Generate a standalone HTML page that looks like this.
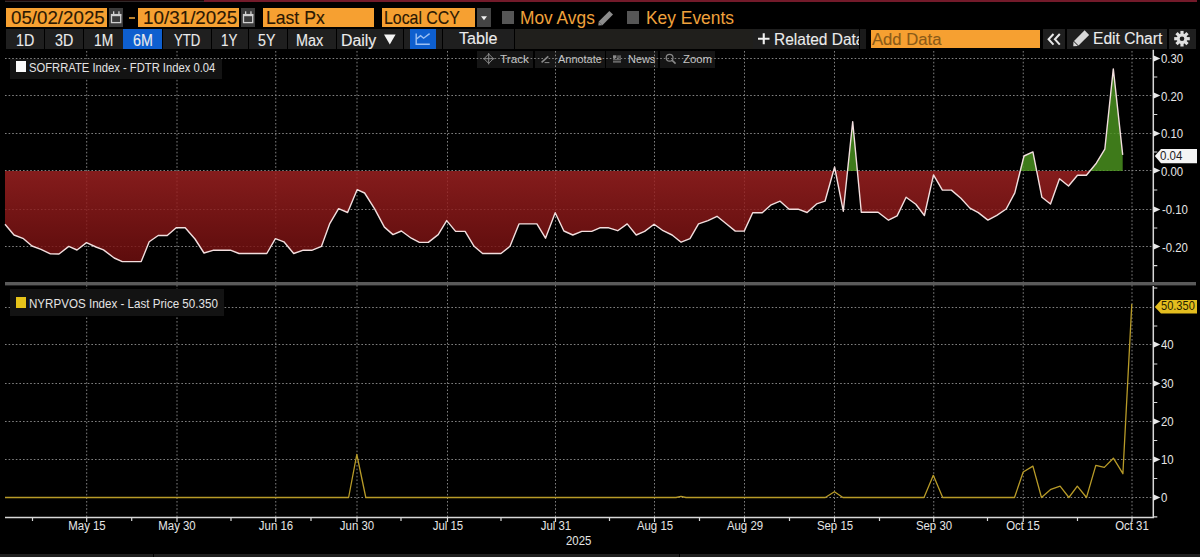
<!DOCTYPE html>
<html><head><meta charset="utf-8"><title>Chart</title>
<style>
html,body{margin:0;padding:0;background:#000;}
body{width:1200px;height:557px;overflow:hidden;position:relative;font-family:"Liberation Sans",sans-serif;}
.a{position:absolute;}
.t{position:absolute;white-space:nowrap;transform-origin:0 0;}
.bold{-webkit-text-stroke:0.12px currentColor;}
.box{position:absolute;background:#f6a031;}
.cal{position:absolute;background:#3b3b3b;}
.btn{position:absolute;top:28.8px;height:20.7px;background:#1f1f1f;}
.tb{position:absolute;top:51.2px;height:16.5px;background:#151515;}
.xl{position:absolute;top:519.95px;width:120px;text-align:center;color:#e6e6e6;font-size:12.82px;line-height:12.82px;white-space:nowrap;transform:scaleX(0.891);transform-origin:60px 0;}
</style></head><body>
<div class="a" style="left:5px;top:0;width:199px;height:1px;background:#1e0808"></div><div class="a" style="left:5px;top:1px;width:199px;height:1px;background:#302828"></div>
<div class="a" style="left:204px;top:0;width:993px;height:1.6px;background:#731a2a"></div>
<!-- track bar -->
<div class="tb" style="left:477px;width:56px"></div>
<div class="tb" style="left:535px;width:70px"></div>
<div class="tb" style="left:606px;width:52px"></div>
<div class="tb" style="left:660px;width:54.5px"></div>
<svg class="a" style="left:0;top:0" width="1200" height="557" viewBox="0 0 1200 557">
<defs><linearGradient id="rg" x1="0" y1="171" x2="0" y2="262" gradientUnits="userSpaceOnUse"><stop offset="0" stop-color="#a22222"/><stop offset="1" stop-color="#720f0f"/></linearGradient><clipPath id="cb"><rect x="0" y="171" width="1200" height="120"/></clipPath><clipPath id="ca"><rect x="0" y="40" width="1200" height="131"/></clipPath></defs>
<path d="M86.7,51 V517 M177,51 V517 M275.75,51 V517 M357,51 V517 M447.5,51 V517 M555.5,51 V517 M654.5,51 V517 M744.5,51 V517 M834.5,51 V517 M933.75,51 V517 M1023.25,51 V517 M1132,51 V517 M5,58.5 H1153.3 M5,95.5 H1153.3 M5,133.5 H1153.3 M5,170.5 H1153.3 M5,209.5 H1153.3 M5,246.5 H1153.3 M5,307.5 H1153.3 M5,344.5 H1153.3 M5,383.5 H1153.3 M5,421.5 H1153.3 M5,459.5 H1153.3 M5,497.5 H1153.3" stroke="#808080" stroke-width="1" stroke-dasharray="1.6 2.0" fill="none"/>
<path d="M5.0,224.2 L14.0,235.0 L23.5,238.7 L32.0,246.0 L41.0,249.3 L50.4,253.9 L59.0,254.0 L68.8,246.4 L77.0,250.0 L86.5,242.6 L96.0,247.0 L103.5,249.9 L114.2,258.0 L122.3,261.6 L141.2,261.6 L149.2,241.8 L158.2,235.5 L167.2,235.5 L176.2,227.8 L185.2,227.8 L195.0,239.0 L204.0,253.0 L213.0,250.3 L231.0,250.3 L239.0,253.5 L266.8,253.5 L275.4,238.6 L283.9,241.8 L293.7,253.5 L302.7,250.3 L311.7,250.3 L321.5,246.3 L329.6,223.9 L338.6,208.6 L347.6,212.5 L357.1,189.7 L364.6,193.0 L374.5,208.6 L384.4,227.1 L393.0,234.6 L401.4,231.0 L411.3,238.2 L419.4,242.4 L428.3,242.4 L438.2,234.6 L446.7,220.6 L455.6,231.4 L465.1,231.4 L474.1,246.3 L482.6,253.5 L501.0,253.5 L510.0,246.3 L519.0,223.9 L536.9,223.9 L545.5,238.2 L555.2,212.7 L563.9,231.0 L572.8,235.0 L581.8,231.4 L591.7,231.4 L599.8,227.8 L608.7,227.8 L617.7,230.7 L627.2,223.9 L636.2,235.0 L644.6,231.4 L654.1,224.2 L663.1,230.7 L672.1,235.0 L681.1,242.2 L690.0,238.6 L698.5,223.9 L708.0,220.6 L717.0,216.3 L727.2,224.5 L735.3,231.1 L744.2,231.1 L752.7,212.8 L762.2,212.8 L771.2,204.8 L780.1,201.2 L789.1,209.2 L798.1,209.2 L807.1,212.5 L816.6,203.9 L825.0,201.2 L834.6,167.0 L843.3,211.2 L852.7,121.8 L861.3,212.3 L878.1,212.3 L888.5,220.2 L897.1,215.9 L906.1,197.2 L915.8,204.3 L924.4,215.5 L933.5,174.9 L942.4,190.1 L951.4,190.1 L960.9,198.2 L969.9,208.1 L978.3,212.6 L987.9,220.1 L996.8,215.3 L1006.2,209.0 L1014.8,192.8 L1024.0,156.0 L1032.9,151.9 L1041.9,197.3 L1050.5,204.0 L1059.5,178.8 L1068.5,186.0 L1077.5,175.2 L1086.4,175.2 L1096.3,163.2 L1104.8,149.2 L1113.3,68.9 L1122.7,154.8 L1122.7,171.0 L5.0,171.0 Z" fill="url(#rg)" fill-opacity="0.82" clip-path="url(#cb)"/>
<path d="M5.0,224.2 L14.0,235.0 L23.5,238.7 L32.0,246.0 L41.0,249.3 L50.4,253.9 L59.0,254.0 L68.8,246.4 L77.0,250.0 L86.5,242.6 L96.0,247.0 L103.5,249.9 L114.2,258.0 L122.3,261.6 L141.2,261.6 L149.2,241.8 L158.2,235.5 L167.2,235.5 L176.2,227.8 L185.2,227.8 L195.0,239.0 L204.0,253.0 L213.0,250.3 L231.0,250.3 L239.0,253.5 L266.8,253.5 L275.4,238.6 L283.9,241.8 L293.7,253.5 L302.7,250.3 L311.7,250.3 L321.5,246.3 L329.6,223.9 L338.6,208.6 L347.6,212.5 L357.1,189.7 L364.6,193.0 L374.5,208.6 L384.4,227.1 L393.0,234.6 L401.4,231.0 L411.3,238.2 L419.4,242.4 L428.3,242.4 L438.2,234.6 L446.7,220.6 L455.6,231.4 L465.1,231.4 L474.1,246.3 L482.6,253.5 L501.0,253.5 L510.0,246.3 L519.0,223.9 L536.9,223.9 L545.5,238.2 L555.2,212.7 L563.9,231.0 L572.8,235.0 L581.8,231.4 L591.7,231.4 L599.8,227.8 L608.7,227.8 L617.7,230.7 L627.2,223.9 L636.2,235.0 L644.6,231.4 L654.1,224.2 L663.1,230.7 L672.1,235.0 L681.1,242.2 L690.0,238.6 L698.5,223.9 L708.0,220.6 L717.0,216.3 L727.2,224.5 L735.3,231.1 L744.2,231.1 L752.7,212.8 L762.2,212.8 L771.2,204.8 L780.1,201.2 L789.1,209.2 L798.1,209.2 L807.1,212.5 L816.6,203.9 L825.0,201.2 L834.6,167.0 L843.3,211.2 L852.7,121.8 L861.3,212.3 L878.1,212.3 L888.5,220.2 L897.1,215.9 L906.1,197.2 L915.8,204.3 L924.4,215.5 L933.5,174.9 L942.4,190.1 L951.4,190.1 L960.9,198.2 L969.9,208.1 L978.3,212.6 L987.9,220.1 L996.8,215.3 L1006.2,209.0 L1014.8,192.8 L1024.0,156.0 L1032.9,151.9 L1041.9,197.3 L1050.5,204.0 L1059.5,178.8 L1068.5,186.0 L1077.5,175.2 L1086.4,175.2 L1096.3,163.2 L1104.8,149.2 L1113.3,68.9 L1122.7,154.8 L1122.7,171.0 L5.0,171.0 Z" fill="#4c9520" fill-opacity="0.82" clip-path="url(#ca)"/>
<path d="M5.0,224.2 L14.0,235.0 L23.5,238.7 L32.0,246.0 L41.0,249.3 L50.4,253.9 L59.0,254.0 L68.8,246.4 L77.0,250.0 L86.5,242.6 L96.0,247.0 L103.5,249.9 L114.2,258.0 L122.3,261.6 L141.2,261.6 L149.2,241.8 L158.2,235.5 L167.2,235.5 L176.2,227.8 L185.2,227.8 L195.0,239.0 L204.0,253.0 L213.0,250.3 L231.0,250.3 L239.0,253.5 L266.8,253.5 L275.4,238.6 L283.9,241.8 L293.7,253.5 L302.7,250.3 L311.7,250.3 L321.5,246.3 L329.6,223.9 L338.6,208.6 L347.6,212.5 L357.1,189.7 L364.6,193.0 L374.5,208.6 L384.4,227.1 L393.0,234.6 L401.4,231.0 L411.3,238.2 L419.4,242.4 L428.3,242.4 L438.2,234.6 L446.7,220.6 L455.6,231.4 L465.1,231.4 L474.1,246.3 L482.6,253.5 L501.0,253.5 L510.0,246.3 L519.0,223.9 L536.9,223.9 L545.5,238.2 L555.2,212.7 L563.9,231.0 L572.8,235.0 L581.8,231.4 L591.7,231.4 L599.8,227.8 L608.7,227.8 L617.7,230.7 L627.2,223.9 L636.2,235.0 L644.6,231.4 L654.1,224.2 L663.1,230.7 L672.1,235.0 L681.1,242.2 L690.0,238.6 L698.5,223.9 L708.0,220.6 L717.0,216.3 L727.2,224.5 L735.3,231.1 L744.2,231.1 L752.7,212.8 L762.2,212.8 L771.2,204.8 L780.1,201.2 L789.1,209.2 L798.1,209.2 L807.1,212.5 L816.6,203.9 L825.0,201.2 L834.6,167.0 L843.3,211.2 L852.7,121.8 L861.3,212.3 L878.1,212.3 L888.5,220.2 L897.1,215.9 L906.1,197.2 L915.8,204.3 L924.4,215.5 L933.5,174.9 L942.4,190.1 L951.4,190.1 L960.9,198.2 L969.9,208.1 L978.3,212.6 L987.9,220.1 L996.8,215.3 L1006.2,209.0 L1014.8,192.8 L1024.0,156.0 L1032.9,151.9 L1041.9,197.3 L1050.5,204.0 L1059.5,178.8 L1068.5,186.0 L1077.5,175.2 L1086.4,175.2 L1096.3,163.2 L1104.8,149.2 L1113.3,68.9 L1122.7,154.8" stroke="#f2dede" stroke-width="1.4" fill="none" stroke-linejoin="round"/>
<path d="M5.0,497.5 L348.6,497.5 L356.8,454.5 L365.8,497.5 L676.0,497.5 L681.0,496.3 L686.0,497.5 L825.3,497.5 L834.4,491.7 L842.9,497.5 L924.0,497.5 L933.3,475.3 L942.7,497.5 L1014.5,497.5 L1023.2,472.0 L1032.9,466.1 L1041.5,497.5 L1050.9,489.3 L1060.1,486.2 L1068.9,497.5 L1077.3,486.2 L1086.5,497.5 L1095.8,465.4 L1104.3,467.4 L1113.4,458.2 L1122.9,473.7 L1131.8,304.0" stroke="#b89b28" stroke-width="1.3" fill="none" stroke-linejoin="round"/>
<rect x="5" y="282" width="1191" height="3.4" fill="#5a5a5a"/>
<path d="M1153.3,49.7 V282 M1153.3,286 V518 M5,517.6 H1154.0" stroke="#d8d8d8" stroke-width="1.5" fill="none"/>
<path d="M1153.3,55.2 L1160.3,58.5 L1153.3,61.8 Z M1153.3,92.2 L1160.3,95.5 L1153.3,98.8 Z M1153.3,130.2 L1160.3,133.5 L1153.3,136.8 Z M1153.3,167.2 L1160.3,170.5 L1153.3,173.8 Z M1153.3,206.2 L1160.3,209.5 L1153.3,212.8 Z M1153.3,243.2 L1160.3,246.5 L1153.3,249.8 Z M1153.3,341.2 L1160.3,344.5 L1153.3,347.8 Z M1153.3,380.2 L1160.3,383.5 L1153.3,386.8 Z M1153.3,418.2 L1160.3,421.5 L1153.3,424.8 Z M1153.3,456.2 L1160.3,459.5 L1153.3,462.8 Z M1153.3,494.2 L1160.3,497.5 L1153.3,500.8 Z" fill="#e8e8e8"/>
<path d="M1153.3,77.0 H1157.3 M1153.3,114.5 H1157.3 M1153.3,152.0 H1157.3 M1153.3,190.0 H1157.3 M1153.3,228.0 H1157.3 M1153.3,265.7 H1157.3 M1153.3,288 H1157.3 M1153.3,326.0 H1157.3 M1153.3,364.0 H1157.3 M1153.3,402.5 H1157.3 M1153.3,440.5 H1157.3 M1153.3,478.5 H1157.3 M1153.3,516.9 H1157.3 M86.7,517.6 V522 M177,517.6 V522 M275.75,517.6 V522 M357,517.6 V522 M447.5,517.6 V522 M555.5,517.6 V522 M654.5,517.6 V522 M744.5,517.6 V522 M834.5,517.6 V522 M933.75,517.6 V522 M1023.25,517.6 V522 M1132,517.6 V522 M32.5,517.6 V521 M131.7,517.6 V521 M231,517.6 V521 M311,517.6 V521 M401,517.6 V521 M501,517.6 V521 M609.5,517.6 V521 M699.5,517.6 V521 M789.5,517.6 V521 M879.5,517.6 V521 M987.5,517.6 V521 M1077.5,517.6 V521" stroke="#d8d8d8" stroke-width="1.2" fill="none"/>
<path d="M1154.8,156 L1161,149 H1197 V163.3 H1161 Z" fill="#f4f4f4"/>
<path d="M1154.8,307 L1161,300 H1197 V313.6 H1161 Z" fill="#e3bd1f"/>
</svg>
<!-- toolbar row 1 -->
<div class="box" style="left:6.2px;top:8px;width:101.3px;height:19px;"></div>
<div class="cal" style="left:108.8px;top:8px;width:14.2px;height:19px;"></div>
<div class="a" style="left:129.3px;top:17px;width:5.7px;height:1.5px;background:#b8802e"></div>
<div class="box" style="left:138.3px;top:8px;width:100.7px;height:19px;"></div>
<div class="cal" style="left:240.5px;top:8px;width:14.5px;height:19px;"></div>
<div class="box" style="left:262.8px;top:8px;width:111.7px;height:19px;"></div>
<div class="box" style="left:382.2px;top:8px;width:93.3px;height:19px;"></div>
<div class="cal" style="left:477px;top:8px;width:14.2px;height:19px;background:#444"></div>
<div class="a" style="left:501.9px;top:11.2px;width:12px;height:12.6px;background:#565656"></div>
<div class="a" style="left:626.5px;top:11.2px;width:12.7px;height:12.6px;background:#565656"></div>
<!-- toolbar row 2 -->
<div class="btn" style="left:6px;width:38px"></div>
<div class="btn" style="left:45px;width:37.5px"></div>
<div class="btn" style="left:83.5px;width:39px"></div>
<div class="btn" style="left:122.5px;width:39.5px;background:#0e5fcf"></div>
<div class="btn" style="left:163px;width:47.5px"></div>
<div class="btn" style="left:211.5px;width:36px"></div>
<div class="btn" style="left:248.5px;width:38px"></div>
<div class="btn" style="left:287.5px;width:48px"></div>
<div class="btn" style="left:336.5px;width:66.5px"></div>
<div class="btn" style="left:404px;width:38px"></div>
<div class="btn" style="left:409.5px;width:26px;background:#0e5fcf"></div>
<div class="btn" style="left:443px;width:71px"></div>
<div class="btn" style="left:515px;width:237.5px;background:#201f1c"></div>
<div class="btn" style="left:752.5px;width:106.5px;overflow:hidden"></div>
<div class="btn" style="left:860px;width:6px;background:#1a1a1a"></div>
<div class="box" style="left:870.5px;top:29.8px;width:169.5px;height:18px;"></div>
<div class="btn" style="left:1043.3px;width:22px"></div>
<div class="btn" style="left:1067.3px;width:100px"></div>
<div class="btn" style="left:1169.3px;width:26.7px"></div>
<!-- legends -->
<div class="a" style="left:9.5px;top:59px;width:212.5px;height:20px;background:#131313"></div>
<div class="a" style="left:15.5px;top:61.2px;width:10.7px;height:10.6px;background:#fafafa"></div>
<div class="a" style="left:9.5px;top:289px;width:214.5px;height:27px;background:#131313"></div>
<div class="a" style="left:15.8px;top:297.2px;width:10.4px;height:10.6px;background:#e6c31a"></div>
<svg class="a" style="left:0;top:0" width="1200" height="80" viewBox="0 0 1200 80">
<g fill="none" stroke="#d0d0d0" stroke-width="1.3">
<rect x="111.5" y="14.6" width="9.2" height="8" />
<rect x="243.5" y="14.6" width="9.2" height="8" />
</g>
<g fill="#d0d0d0">
<rect x="111" y="14" width="10.2" height="2.2"/>
<rect x="113" y="11.3" width="1.3" height="3"/><rect x="118.3" y="11.3" width="1.3" height="3"/>
<rect x="243" y="14" width="10.2" height="2.2"/>
<rect x="245" y="11.3" width="1.3" height="3"/><rect x="250.3" y="11.3" width="1.3" height="3"/>
</g>
<path d="M481,16.2 L487,16.2 L484,20.2 Z" fill="#f0f0f0"/>
<!-- Mov Avgs pencil -->
<g transform="translate(598.3,25.6) rotate(-45)">
<rect x="3.2" y="-2.6" width="15" height="5.2" fill="#8c8c8c"/>
<path d="M0,0 L3.2,-2.6 L3.2,2.6 Z" fill="#8c8c8c"/>
</g>
<!-- Daily triangle -->
<path d="M384,34.4 L395.6,34.4 L389.8,44.5 Z" fill="#f4f4f4"/>
<!-- chart icon -->
<path d="M416.2,33.5 V44.3 H429.8 M416.2,39.2 L420.6,35.6 L423.6,38.2 L429.6,33.6" fill="none" stroke="#9cc0f4" stroke-width="1.4"/>
<!-- plus -->
<path d="M758,38.8 H769.5 M763.75,33.3 V44.3" stroke="#f0f0f0" stroke-width="2.1"/>
<!-- chevrons -->
<path d="M1053.5,34 L1048.6,39.3 L1053.5,44.6 M1059.8,34 L1054.9,39.3 L1059.8,44.6" fill="none" stroke="#e8e8e8" stroke-width="2"/>
<!-- edit pencil -->
<g transform="translate(1073.3,46.2) rotate(-45)">
<rect x="4.2" y="-3.2" width="15" height="6.4" fill="#d8d8d8"/>
<path d="M0,0 L3.4,-3.2 L3.4,3.2 Z" fill="#d8d8d8"/>
</g>
<!-- gear -->
<g transform="translate(1182,38.7)" fill="#e0e0e0">
<circle r="5.2"/>
<g id="teeth">
<rect x="-1.6" y="-7.8" width="3.2" height="15.6"/>
<rect x="-1.6" y="-7.8" width="3.2" height="15.6" transform="rotate(45)"/>
<rect x="-1.6" y="-7.8" width="3.2" height="15.6" transform="rotate(90)"/>
<rect x="-1.6" y="-7.8" width="3.2" height="15.6" transform="rotate(135)"/>
</g>
<circle r="2.3" fill="#1f1f1f"/>
</g>
<!-- track icon -->
<g stroke="#8a8a8a" stroke-width="1" fill="none">
<path d="M488.7,54 L493.4,58.7 L488.7,63.4 L484,58.7 Z"/>
<path d="M488.7,53 V64.4 M483,58.7 H494.4"/>
</g>
<!-- annotate icon -->
<path d="M541.6,62.3 L548.3,56.3" stroke="#8a8a8a" stroke-width="1.6"/>
<path d="M544.6,62.6 H549.4" stroke="#8a8a8a" stroke-width="1"/>
<!-- news icon -->
<g fill="#8a8a8a">
<rect x="613" y="55.3" width="3.4" height="3"/>
<rect x="617.2" y="55.6" width="3.8" height="1"/>
<rect x="617.2" y="57.4" width="3.8" height="1"/>
<rect x="613" y="59.3" width="8" height="1"/>
<rect x="613" y="61.3" width="8" height="1.2"/>
</g>
<!-- zoom icon -->
<circle cx="669.6" cy="57.8" r="3.4" stroke="#8a8a8a" stroke-width="1.2" fill="none"/>
<path d="M672.2,60.4 L675.6,63.6" stroke="#8a8a8a" stroke-width="1.6"/>
</svg>

<div class="a" style="left:752.5px;top:28.8px;width:106.5px;height:20.7px;overflow:hidden">
<div class="t bold" style="left:21.76px;top:2.20px;font-size:17.13px;line-height:17.13px;color:#ececec;transform:scaleX(0.906);">Related Data</div>
</div>
<div class="t bold" style="left:11.25px;top:8.80px;font-size:18.66px;line-height:18.66px;color:#2b1803;transform:scaleX(1.004);">05/02/2025</div>
<div class="t bold" style="left:142.99px;top:8.99px;font-size:18.09px;line-height:18.09px;color:#2b1803;transform:scaleX(1.042);">10/31/2025</div>
<div class="t bold" style="left:265.59px;top:8.74px;font-size:18.50px;line-height:18.50px;color:#2b1803;transform:scaleX(0.951);">Last Px</div>
<div class="t bold" style="left:383.73px;top:8.74px;font-size:18.50px;line-height:18.50px;color:#2b1803;transform:scaleX(0.857);">Local CCY</div>
<div class="t " style="left:520.31px;top:9.04px;font-size:18.21px;line-height:18.21px;color:#f0a23c;transform:scaleX(0.953);">Mov Avgs</div>
<div class="t " style="left:645.61px;top:8.99px;font-size:18.21px;line-height:18.21px;color:#f0a23c;transform:scaleX(0.956);">Key Events</div>
<div class="t bold" style="left:15.85px;top:31.57px;font-size:16.46px;line-height:16.46px;color:#ececec;transform:scaleX(0.872);">1D</div>
<div class="t bold" style="left:54.93px;top:31.57px;font-size:16.46px;line-height:16.46px;color:#ececec;transform:scaleX(0.868);">3D</div>
<div class="t bold" style="left:93.89px;top:31.57px;font-size:16.46px;line-height:16.46px;color:#ececec;transform:scaleX(0.840);">1M</div>
<div class="t bold" style="left:133.29px;top:31.57px;font-size:16.46px;line-height:16.46px;color:#ececec;transform:scaleX(0.868);">6M</div>
<div class="t bold" style="left:173.74px;top:31.57px;font-size:16.46px;line-height:16.46px;color:#ececec;transform:scaleX(0.803);">YTD</div>
<div class="t bold" style="left:220.93px;top:31.57px;font-size:16.46px;line-height:16.46px;color:#ececec;transform:scaleX(0.814);">1Y</div>
<div class="t bold" style="left:258.43px;top:31.57px;font-size:16.46px;line-height:16.46px;color:#ececec;transform:scaleX(0.864);">5Y</div>
<div class="t bold" style="left:295.84px;top:31.57px;font-size:16.46px;line-height:16.46px;color:#ececec;transform:scaleX(0.878);">Max</div>
<div class="t bold" style="left:340.73px;top:31.60px;font-size:16.42px;line-height:16.42px;color:#ececec;transform:scaleX(0.968);">Daily</div>
<div class="t bold" style="left:459.18px;top:31.36px;font-size:16.70px;line-height:16.70px;color:#ececec;transform:scaleX(0.964);">Table</div>
<div class="t bold" style="left:872.00px;top:30.96px;font-size:17.41px;line-height:17.41px;color:#8a5a18;transform:scaleX(0.957);">Add Data</div>
<div class="t bold" style="left:1092.75px;top:31.26px;font-size:16.70px;line-height:16.70px;color:#ececec;transform:scaleX(0.934);">Edit Chart</div>
<div class="t " style="left:500.06px;top:53.81px;font-size:11.32px;line-height:11.32px;color:#c4c4c4;transform:scaleX(1.039);">Track</div>
<div class="t " style="left:557.50px;top:53.91px;font-size:11.22px;line-height:11.22px;color:#c4c4c4;transform:scaleX(0.975);">Annotate</div>
<div class="t " style="left:628.13px;top:54.13px;font-size:11.07px;line-height:11.07px;color:#c4c4c4;transform:scaleX(0.987);">News</div>
<div class="t " style="left:682.66px;top:54.13px;font-size:11.07px;line-height:11.07px;color:#c4c4c4;transform:scaleX(1.028);">Zoom</div>
<div class="t " style="left:29.44px;top:61.72px;font-size:12.38px;line-height:12.38px;color:#e4e4e4;transform:scaleX(0.907);">SOFRRATE Index - FDTR Index 0.04</div>
<div class="t " style="left:29.07px;top:297.72px;font-size:12.38px;line-height:12.38px;color:#e4e4e4;transform:scaleX(0.937);">NYRPVOS Index - Last Price 50.350</div>
<div class="t " style="left:1161.24px;top:53.19px;font-size:12.06px;line-height:12.06px;color:#e6e6e6;transform:scaleX(0.944);">0.30</div>
<div class="t " style="left:1161.24px;top:90.69px;font-size:12.06px;line-height:12.06px;color:#e6e6e6;transform:scaleX(0.944);">0.20</div>
<div class="t " style="left:1161.24px;top:128.19px;font-size:12.06px;line-height:12.06px;color:#e6e6e6;transform:scaleX(0.944);">0.10</div>
<div class="t " style="left:1161.24px;top:165.69px;font-size:12.06px;line-height:12.06px;color:#e6e6e6;transform:scaleX(0.944);">0.00</div>
<div class="t " style="left:calc(-4.2px + 1166.34px);top:203.69px;font-size:12.06px;line-height:12.06px;color:#e6e6e6;transform:scaleX(0.944);">-0.10</div>
<div class="t " style="left:calc(-4.2px + 1166.34px);top:241.69px;font-size:12.06px;line-height:12.06px;color:#e6e6e6;transform:scaleX(0.944);">-0.20</div>
<div class="t " style="left:1161.24px;top:339.29px;font-size:12.06px;line-height:12.06px;color:#e6e6e6;transform:scaleX(0.944);">40</div>
<div class="t " style="left:1161.24px;top:377.69px;font-size:12.06px;line-height:12.06px;color:#e6e6e6;transform:scaleX(0.944);">30</div>
<div class="t " style="left:1161.24px;top:415.99px;font-size:12.06px;line-height:12.06px;color:#e6e6e6;transform:scaleX(0.944);">20</div>
<div class="t " style="left:1161.24px;top:454.29px;font-size:12.06px;line-height:12.06px;color:#e6e6e6;transform:scaleX(0.944);">10</div>
<div class="t " style="left:1161.24px;top:492.49px;font-size:12.06px;line-height:12.06px;color:#e6e6e6;transform:scaleX(0.944);">0</div>
<div class="t " style="left:1160.34px;top:150.46px;font-size:12.92px;line-height:12.92px;color:#1e1e1e;transform:scaleX(0.893);">0.04</div>
<div class="t " style="left:1160.76px;top:300.30px;font-size:12.63px;line-height:12.63px;color:#261e00;transform:scaleX(0.876);">50.350</div>
<div class="xl" style="left:26.70px;">May 15</div>
<div class="xl" style="left:117.00px;">May 30</div>
<div class="xl" style="left:215.75px;">Jun 16</div>
<div class="xl" style="left:297.00px;">Jun 30</div>
<div class="xl" style="left:387.50px;">Jul 15</div>
<div class="xl" style="left:495.50px;">Jul 31</div>
<div class="xl" style="left:594.50px;">Aug 15</div>
<div class="xl" style="left:684.50px;">Aug 29</div>
<div class="xl" style="left:774.50px;">Sep 15</div>
<div class="xl" style="left:873.75px;">Sep 30</div>
<div class="xl" style="left:963.25px;">Oct 15</div>
<div class="xl" style="left:1072.00px;">Oct 31</div>
<div class="t " style="left:566.43px;top:534.46px;font-size:13.28px;line-height:13.28px;color:#e6e6e6;transform:scaleX(0.857);">2025</div>
<div class="a" style="left:0;top:553.8px;width:153px;height:3.2px;background:#1f1f1f"></div>
<div class="a" style="left:154px;top:553.8px;width:524.5px;height:3.2px;background:#1f1f1f"></div>
<div class="a" style="left:679.5px;top:553.8px;width:520.5px;height:3.2px;background:#1f1f1f"></div>
</body></html>
